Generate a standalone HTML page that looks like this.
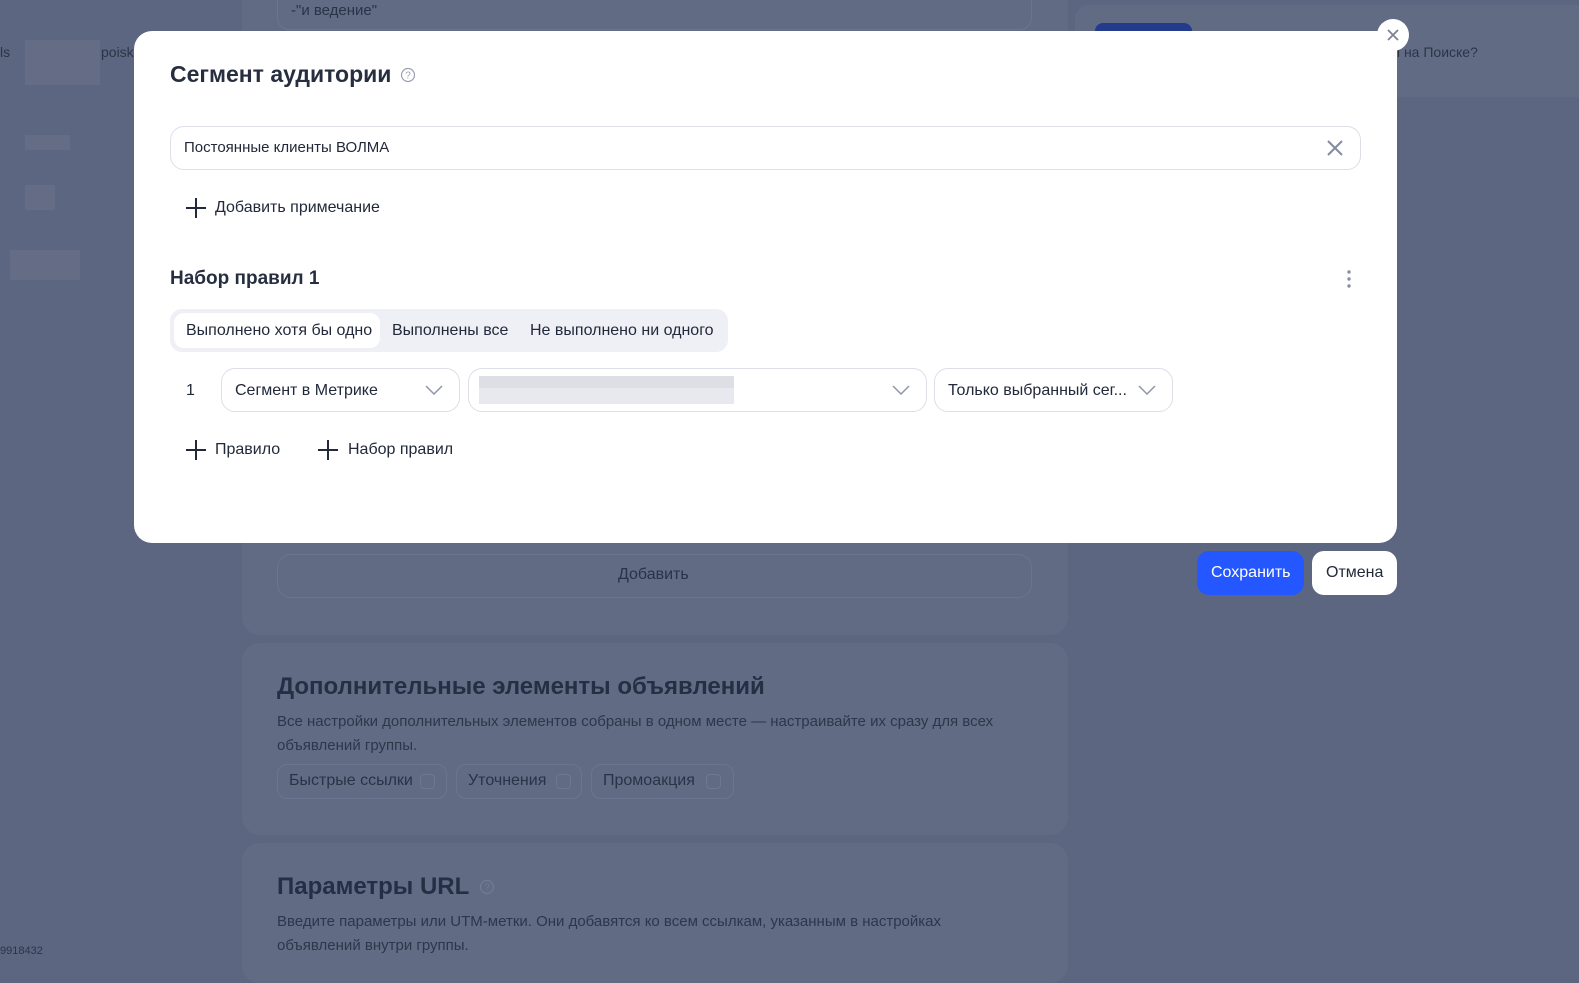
<!DOCTYPE html>
<html><head><meta charset="utf-8"><style>
*{box-sizing:border-box;margin:0;padding:0}
body{width:1579px;height:965px;overflow:hidden;background:#5c6680;font-family:"Liberation Sans","Noto Sans CJK SC",sans-serif;position:relative;color:#1e2535}
.abs{position:absolute}
.panel{position:absolute;background:#626b84;border-radius:18px}
.m{position:absolute;left:134px;top:31px;width:1263px;height:512px;background:#fff;border-radius:18px}
.f{position:absolute;border:1px solid #dcdfe8;border-radius:14px;background:#fff}
.t{position:absolute;font-size:16px;color:#22293a;white-space:nowrap}
.plus{position:absolute;width:20px;height:20px}
.plus:before{content:"";position:absolute;left:9px;top:0;width:2px;height:20px;background:#22293a}
.plus:after{content:"";position:absolute;left:0;top:9px;width:20px;height:2px;background:#22293a}
.chev{position:absolute;width:18px;height:10px}
.blur{position:absolute;background:#646d85}
.cb{position:absolute;width:15px;height:15px;border:1px solid #6f7892;border-radius:4px}
</style></head><body>
<div class="blur" style="left:25px;top:40px;width:75px;height:45px"></div>
<div class="blur" style="left:25px;top:135px;width:45px;height:15px"></div>
<div class="blur" style="left:25px;top:185px;width:30px;height:25px"></div>
<div class="blur" style="left:10px;top:250px;width:70px;height:30px"></div>
<div class="t" style="left:0;top:44px;font-size:14px;color:#2d3446">ls</div>
<div class="t" style="left:101px;top:44px;font-size:14px;color:#2d3446">poisk</div>
<div class="t" style="left:0;top:945px;font-size:11px;color:#2d3446">9918432</div>
<div class="panel" style="left:242px;top:-20px;width:826px;height:655px"></div>
<div class="abs" style="left:277px;top:-10px;width:755px;height:40px;border:1px solid #6c7590;border-radius:12px"></div>
<div class="t" style="left:291px;top:2px;font-size:15px;color:#2a3247">-"и ведение"</div>
<div class="abs" style="left:277px;top:554px;width:755px;height:44px;border:1px solid #6c7590;border-radius:14px"></div>
<div class="t" style="left:618px;top:566px;color:#2a3247">Добавить</div>
<div class="panel" style="left:242px;top:643px;width:826px;height:192px"></div>
<div class="t" style="left:277px;top:673px;font-size:24px;font-weight:bold;color:#262e44">Дополнительные элементы объявлений</div>
<div class="t" style="left:277px;top:710px;font-size:15px;color:#2e364a;line-height:24px;white-space:normal;width:730px">Все настройки дополнительных элементов собраны в одном месте — настраивайте их сразу для всех объявлений группы.</div>
<div class="abs" style="left:277px;top:764px;width:170px;height:35px;border:1px solid #6c7590;border-radius:10px"></div>
<div class="t" style="left:289px;top:772px;color:#2a3247">Быстрые ссылки</div><div class="cb" style="left:420px;top:774px"></div>
<div class="abs" style="left:456px;top:764px;width:126px;height:35px;border:1px solid #6c7590;border-radius:10px"></div>
<div class="t" style="left:468px;top:772px;color:#2a3247">Уточнения</div><div class="cb" style="left:556px;top:774px"></div>
<div class="abs" style="left:591px;top:764px;width:143px;height:35px;border:1px solid #6c7590;border-radius:10px"></div>
<div class="t" style="left:603px;top:772px;color:#2a3247">Промоакция</div><div class="cb" style="left:706px;top:774px"></div>
<div class="panel" style="left:242px;top:843px;width:826px;height:140px"></div>
<div class="t" style="left:277px;top:873px;font-size:24px;font-weight:bold;color:#262e44">Параметры URL</div>
<svg class="abs" style="left:479px;top:879px" width="16" height="16" viewBox="0 0 16 16"><circle cx="8" cy="8" r="6.5" fill="none" stroke="#737c95" stroke-width="1.2"/><text x="8" y="11.5" font-size="10" text-anchor="middle" fill="#737c95" font-family="Liberation Sans">?</text></svg>
<div class="t" style="left:277px;top:910px;font-size:15px;color:#2e364a;line-height:24px;white-space:normal;width:730px">Введите параметры или UTM-метки. Они добавятся ко всем ссылкам, указанным в настройках объявлений внутри группы.</div>
<div class="panel" style="left:1075px;top:5px;width:520px;height:92px;border-radius:14px"></div>
<div class="abs" style="left:1095px;top:23px;width:97px;height:12px;background:#233b8a;border-radius:8px 8px 0 0"></div>
<div class="t" style="left:1390px;top:44px;font-size:14px;color:#2d3446">ы на Поиске?</div>

<div class="m"></div>
<div class="t" style="left:170px;top:61px;font-size:23px;font-weight:bold;color:#262e3f">Сегмент аудитории</div>
<svg class="abs" style="left:400px;top:67px" width="16" height="16" viewBox="0 0 16 16"><circle cx="8" cy="8" r="6.5" fill="none" stroke="#9aa0b0" stroke-width="1.2"/><text x="8" y="11.5" font-size="10" text-anchor="middle" fill="#9aa0b0" font-family="Liberation Sans">?</text></svg>
<div class="f" style="left:170px;top:126px;width:1191px;height:44px"></div>
<div class="t" style="left:184px;top:139px;font-size:15px">Постоянные клиенты ВОЛМА</div>
<svg class="abs" style="left:1327px;top:140px" width="16" height="16"><path d="M1 1L15 15M15 1L1 15" stroke="#858aa0" stroke-width="2"/></svg>
<div class="plus" style="left:186px;top:198px"></div>
<div class="t" style="left:215px;top:199px">Добавить примечание</div>
<div class="t" style="left:170px;top:268px;font-size:19px;font-weight:bold;color:#262e3f">Набор правил 1</div>
<svg class="abs" style="left:1346px;top:269px" width="6" height="20"><circle cx="3" cy="3" r="1.7" fill="#8a8fa0"/><circle cx="3" cy="10" r="1.7" fill="#8a8fa0"/><circle cx="3" cy="17" r="1.7" fill="#8a8fa0"/></svg>
<div class="abs" style="left:170px;top:309px;width:558px;height:43px;background:#eef0f5;border-radius:12px"></div>
<div class="abs" style="left:174px;top:313px;width:206px;height:35px;background:#fff;border-radius:10px"></div>
<div class="t" style="left:186px;top:322px">Выполнено хотя бы одно</div>
<div class="t" style="left:392px;top:322px">Выполнены все</div>
<div class="t" style="left:530px;top:322px">Не выполнено ни одного</div>
<div class="t" style="left:186px;top:382px">1</div>
<div class="f" style="left:221px;top:368px;width:239px;height:44px"></div>
<div class="t" style="left:235px;top:382px">Сегмент в Метрике</div>
<svg class="chev" style="left:425px;top:385px" viewBox="0 0 18 10"><path d="M1 1L9 9L17 1" fill="none" stroke="#9096a8" stroke-width="1.5"/></svg>
<div class="f" style="left:468px;top:368px;width:459px;height:44px"></div>
<div class="abs" style="left:479px;top:376px;width:255px;height:28px;background:#e8e9ee"></div>
<div class="abs" style="left:479px;top:376px;width:255px;height:12px;background:#dedfe5"></div>
<svg class="chev" style="left:892px;top:385px" viewBox="0 0 18 10"><path d="M1 1L9 9L17 1" fill="none" stroke="#9096a8" stroke-width="1.5"/></svg>
<div class="f" style="left:934px;top:368px;width:239px;height:44px"></div>
<div class="t" style="left:948px;top:382px">Только выбранный сег...</div>
<svg class="chev" style="left:1138px;top:385px" viewBox="0 0 18 10"><path d="M1 1L9 9L17 1" fill="none" stroke="#9096a8" stroke-width="1.5"/></svg>
<div class="plus" style="left:186px;top:440px"></div>
<div class="t" style="left:215px;top:441px">Правило</div>
<div class="plus" style="left:318px;top:440px"></div>
<div class="t" style="left:348px;top:441px">Набор правил</div>
<div class="abs" style="left:1377px;top:19px;width:32px;height:32px;border-radius:50%;background:#fff"></div>
<svg class="abs" style="left:1387px;top:29px" width="12" height="12"><path d="M1 1L11 11M11 1L1 11" stroke="#7d8296" stroke-width="1.8"/></svg>
<div class="abs" style="left:1197px;top:551px;width:107px;height:44px;background:#2457ff;border-radius:12px"></div>
<div class="t" style="left:1211px;top:564px;color:#fff">Сохранить</div>
<div class="abs" style="left:1312px;top:551px;width:85px;height:44px;background:#fff;border-radius:12px"></div>
<div class="t" style="left:1326px;top:564px">Отмена</div>
</body></html>
